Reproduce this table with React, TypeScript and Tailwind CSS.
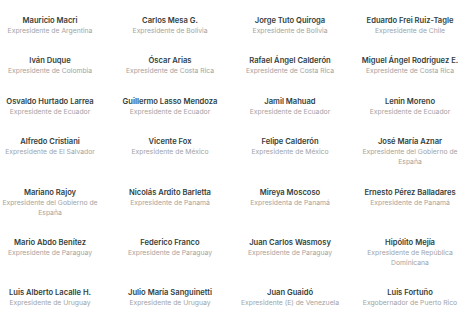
const people = [
  { name: 'Mauricio Macri', role: 'Expresidente de Argentina' },
  { name: 'Carlos Mesa G.', role: 'Expresidente de Bolivia' },
  { name: 'Jorge Tuto Quiroga', role: 'Expresidente de Bolivia' },
  { name: 'Eduardo Frei Ruiz-Tagle', role: 'Expresidente de Chile' },
  { name: 'Iván Duque', role: 'Expresidente de Colombia' },
  { name: 'Óscar Arias', role: 'Expresidente de Costa Rica' },
  { name: 'Rafael Ángel Calderón', role: 'Expresidente de Costa Rica' },
  { name: 'Miguel Ángel Rodríguez E.', role: 'Expresidente de Costa Rica' },
  { name: 'Osvaldo Hurtado Larrea', role: 'Expresidente de Ecuador' },
  { name: 'Guillermo Lasso Mendoza', role: 'Expresidente de Ecuador' },
  { name: 'Jamil Mahuad', role: 'Expresidente de Ecuador' },
  { name: 'Lenin Moreno', role: 'Expresidente de Ecuador' },
  { name: 'Alfredo Cristiani', role: 'Expresidente de El Salvador' },
  { name: 'Vicente Fox', role: 'Expresidente de México' },
  { name: 'Felipe Calderón', role: 'Expresidente de México' },
  { name: 'José María Aznar', role: 'Expresidente del Gobierno de España' },
  { name: 'Mariano Rajoy', role: 'Expresidente del Gobierno de España' },
  { name: 'Nicolás Ardito Barletta', role: 'Expresidente de Panamá' },
  { name: 'Mireya Moscoso', role: 'Expresidenta de Panamá' },
  { name: 'Ernesto Pérez Balladares', role: 'Expresidente de Panamá' },
  { name: 'Mario Abdo Benítez', role: 'Expresidente de Paraguay' },
  { name: 'Federico Franco', role: 'Expresidente de Paraguay' },
  { name: 'Juan Carlos Wasmosy', role: 'Expresidente de Paraguay' },
  { name: 'Hipólito Mejía', role: 'Expresidente de República Dominicana' },
  { name: 'Luis Alberto Lacalle H.', role: 'Expresidente de Uruguay' },
  { name: 'Julio María Sanguinetti', role: 'Expresidente de Uruguay' },
  { name: 'Juan Guaidó', role: 'Expresidente (E) de Venezuela' },
  { name: 'Luis Fortuño', role: 'Exgobernador de Puerto Rico' },
]

export default function App() {
  return (
    <div className="min-h-screen bg-white font-['Inter',sans-serif]">
      <div className="grid w-[460px] grid-cols-4 gap-x-5 gap-y-[20.4px] pt-[16px]">
        {people.map((p) => (
          <div key={p.name} className="text-center">
            <p className="whitespace-nowrap text-[7.6px] leading-[10px] font-semibold text-[#33413d]">{p.name}</p>
            <p className="text-[6.8px] leading-[10px] text-[#a3a3a3]">{p.role}</p>
          </div>
        ))}
      </div>
    </div>
  )
}
